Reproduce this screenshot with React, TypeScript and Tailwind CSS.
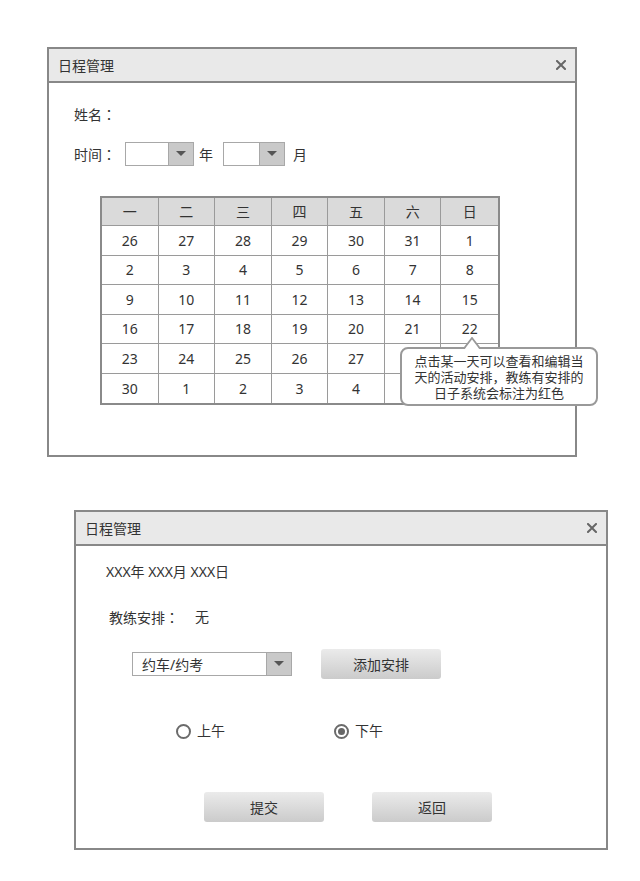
import React from 'react';

const weekDays = ['一', '二', '三', '四', '五', '六', '日'];

// null = cell hidden under the tooltip
const weeks: (number | null)[][] = [
    [26, 27, 28, 29, 30, 31, 1],
    [2, 3, 4, 5, 6, 7, 8],
    [9, 10, 11, 12, 13, 14, 15],
    [16, 17, 18, 19, 20, 21, 22],
    [23, 24, 25, 26, 27, null, null],
    [30, 1, 2, 3, 4, null, null],
];

function Punct({ children }: { children: React.ReactNode }) {
    return <span className="font-['Noto_Sans_CJK_TC',sans-serif]">{children}</span>;
}

function CloseIcon() {
    return (
        <svg width="10" height="10" viewBox="0 0 10 10">
            <path d="M1 1 L9 9 M9 1 L1 9" stroke="#666" strokeWidth="2" strokeLinecap="square" />
        </svg>
    );
}

function DialogHeader({ title }: { title: string }) {
    return (
        <div className="h-[34px] flex items-center justify-between pl-[9px] pr-[9px] bg-[#e9e9e9] border-b-2 border-[#888]">
            <span className="text-[14px] text-[#333]">{title}</span>
            <CloseIcon />
        </div>
    );
}

function Caret() {
    return (
        <svg width="10" height="6" viewBox="0 0 10 6">
            <path d="M0 0 L10 0 L5 5 Z" fill="#555" />
        </svg>
    );
}

function Select({ width, text }: { width: string; text?: string }) {
    return (
        <div className={`flex h-[24px] border border-[#a8a8a8] bg-white ${width}`}>
            <div className="flex-1 flex items-center pl-[9px] text-[14px] text-[#333]">{text}</div>
            <div className="w-[25px] flex items-center justify-center bg-[#c9c9c9] border-l border-[#a8a8a8]">
                <Caret />
            </div>
        </div>
    );
}

function GrayButton({ label }: { label: string }) {
    return (
        <button className="w-[120px] h-[30px] rounded-[3px] bg-gradient-to-b from-[#ebebeb] to-[#cbcbcb] text-[14px] text-[#333]">
            {label}
        </button>
    );
}

function Radio({ checked, label }: { checked?: boolean; label: string }) {
    return (
        <div className="flex items-center gap-[6px]">
            <span className="w-[15px] h-[15px] rounded-full border-2 border-[#6b6b6b] flex items-center justify-center bg-white">
                {checked && <span className="w-[7px] h-[7px] rounded-full bg-[#666]" />}
            </span>
            <span className="text-[14px] text-[#333] leading-[20px]">{label}</span>
        </div>
    );
}

function Calendar() {
    return (
        <div className="w-[400px] border-2 border-[#8a8a8a] bg-white">
            <div className="grid grid-cols-7 h-[28px] bg-[#dadada] border-b border-[#9a9a9a]">
                {weekDays.map((d, i) => (
                    <div key={d} className={`flex items-center justify-center text-[14px] text-[#333] ${i < 6 ? 'border-r border-[#9a9a9a]' : ''}`}>
                        {d}
                    </div>
                ))}
            </div>
            {weeks.map((week, r) => (
                <div key={r} className={`grid grid-cols-7 h-[29.5px] ${r < 5 ? 'border-b border-[#9a9a9a]' : ''}`}>
                    {week.map((n, i) => (
                        <div key={i} className={`flex items-center justify-center text-[14px] text-[#333] ${i < 6 ? 'border-r border-[#9a9a9a]' : ''}`}>
                            {n}
                        </div>
                    ))}
                </div>
            ))}
        </div>
    );
}

export default function App() {
    return (
        <div className="w-[640px] min-h-[881px] bg-white font-['Noto_Sans','Noto_Sans_CJK_SC',sans-serif] text-[#333] pt-[47px]">
            {/* 日历对话框 */}
            <div className="relative ml-[47px] w-[530px] h-[410px] border-2 border-[#888] bg-white">
                <DialogHeader title="日程管理" />
                <div className="pl-[25px] pt-[21px]">
                    <div className="h-[20px] leading-[20px] text-[14px]">姓名<Punct>：</Punct></div>
                    <div className="mt-[18px] flex items-center h-[24px] text-[14px]">
                        <span className="w-[51px]">时间<Punct>：</Punct></span>
                        <Select width="w-[69px]" />
                        <span className="ml-[5px] w-[24px]">年</span>
                        <Select width="w-[62px]" />
                        <span className="ml-[8px]">月</span>
                    </div>
                    <div className="mt-[30px] ml-[26px]">
                        <Calendar />
                    </div>
                </div>

                {/* tooltip */}
                <div className="absolute left-[351px] top-[298px] w-[198px] h-[59px] rounded-[8px] border-2 border-[#999] bg-white flex flex-col items-center justify-center">
                    <svg className="absolute left-[62px] -top-[12px]" width="16" height="13" viewBox="0 0 16 13">
                        <path d="M0 13 L8 1 L16 13 Z" fill="#fff" />
                        <path d="M0 11.5 L8 1 L16 11.5" fill="none" stroke="#999" strokeWidth="1.8" />
                    </svg>
                    <div className="text-[13px] leading-[16px] h-[16px] text-[#333]">点击某一天可以查看和编辑当</div>
                    <div className="text-[13px] leading-[16px] h-[16px] text-[#333]">天的活动安排，教练有安排的</div>
                    <div className="text-[13px] leading-[16px] h-[16px] text-[#333]">日子系统会标注为红色</div>
                </div>
            </div>

            {/* 日程详情对话框 */}
            <div className="mt-[53px] ml-[74px] w-[534px] h-[340px] border-2 border-[#888] bg-white">
                <DialogHeader title="日程管理" />
                <div className="pt-[16px]">
                    <div className="ml-[30px] h-[20px] leading-[20px] text-[14px]">XXX年 XXX月 XXX日</div>
                    <div className="ml-[33px] mt-[25px] h-[20px] leading-[20px] text-[14px] flex">
                        <span className="w-[86px]">教练安排<Punct>：</Punct></span>
                        <span>无</span>
                    </div>
                    <div className="ml-[56px] mt-[22px] h-[30px] flex items-center">
                        <Select width="w-[160px]" text="约车/约考" />
                        <div className="ml-[29px]">
                            <GrayButton label="添加安排" />
                        </div>
                    </div>
                    <div className="ml-[100px] mt-[42px] h-[20px] flex items-center">
                        <div className="w-[158px]">
                            <Radio label="上午" />
                        </div>
                        <Radio label="下午" checked />
                    </div>
                    <div className="ml-[128px] mt-[51px] flex gap-[48px]">
                        <GrayButton label="提交" />
                        <GrayButton label="返回" />
                    </div>
                </div>
            </div>
        </div>
    );
}
